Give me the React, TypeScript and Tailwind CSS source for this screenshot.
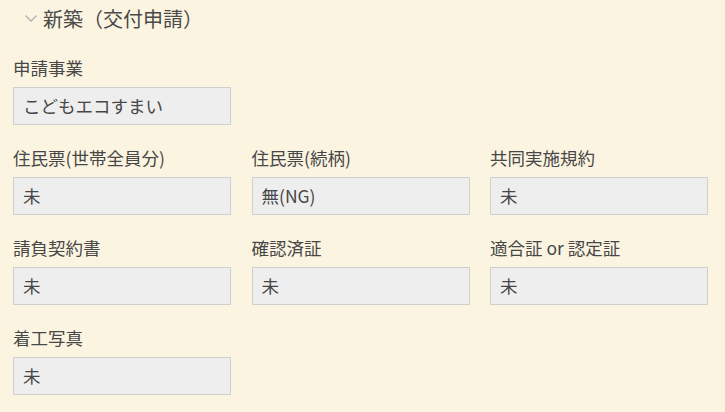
import React from 'react';

type Field = { label: string; value: string };

const rows: Field[][] = [
  [{ label: '申請事業', value: 'こどもエコすまい' }],
  [
    { label: '住民票(世帯全員分)', value: '未' },
    { label: '住民票(続柄)', value: '無(NG)' },
    { label: '共同実施規約', value: '未' },
  ],
  [
    { label: '請負契約書', value: '未' },
    { label: '確認済証', value: '未' },
    { label: '適合証 or 認定証', value: '未' },
  ],
  [{ label: '着工写真', value: '未' }],
];

const FieldBox: React.FC<{ field: Field }> = ({ field }) => (
  <div className="w-[218px]">
    <div className="h-[31px] text-[17.5px] leading-[24px] text-[#474747]">{field.label}</div>
    <div className="h-[38px] border border-[#cfcfcf] bg-[#eeeeee] pl-[9px] text-[17.5px] leading-[36px] text-[#474747]">
      {field.value}
    </div>
  </div>
);

export default function App() {
  return (
    <div
      className="w-[725px] h-[412px] overflow-hidden bg-[#fbf4e1]"
      style={{ fontFamily: '"Meiryo", "Noto Sans CJK JP", "Noto Sans", sans-serif' }}
    >
      <div className="flex items-center pl-[25px] pt-[4px] h-[34px]">
        <svg width="12" height="7" viewBox="0 0 12 7" className="mr-[6px] mt-[-1px]">
          <path d="M0.5 0.5 L6 6 L11.5 0.5" fill="none" stroke="#b0b0b0" strokeWidth="1.3" />
        </svg>
        <span className="text-[20px] leading-[30px] text-[#4a4a4a]">新築（交付申請）</span>
      </div>
      <div className="flex flex-col gap-[21px] pl-[13px] pt-[22px]">
        {rows.map((row, i) => (
          <div key={i} className="flex gap-[20.5px]">
            {row.map((f) => (
              <FieldBox key={f.label} field={f} />
            ))}
          </div>
        ))}
      </div>
    </div>
  );
}
